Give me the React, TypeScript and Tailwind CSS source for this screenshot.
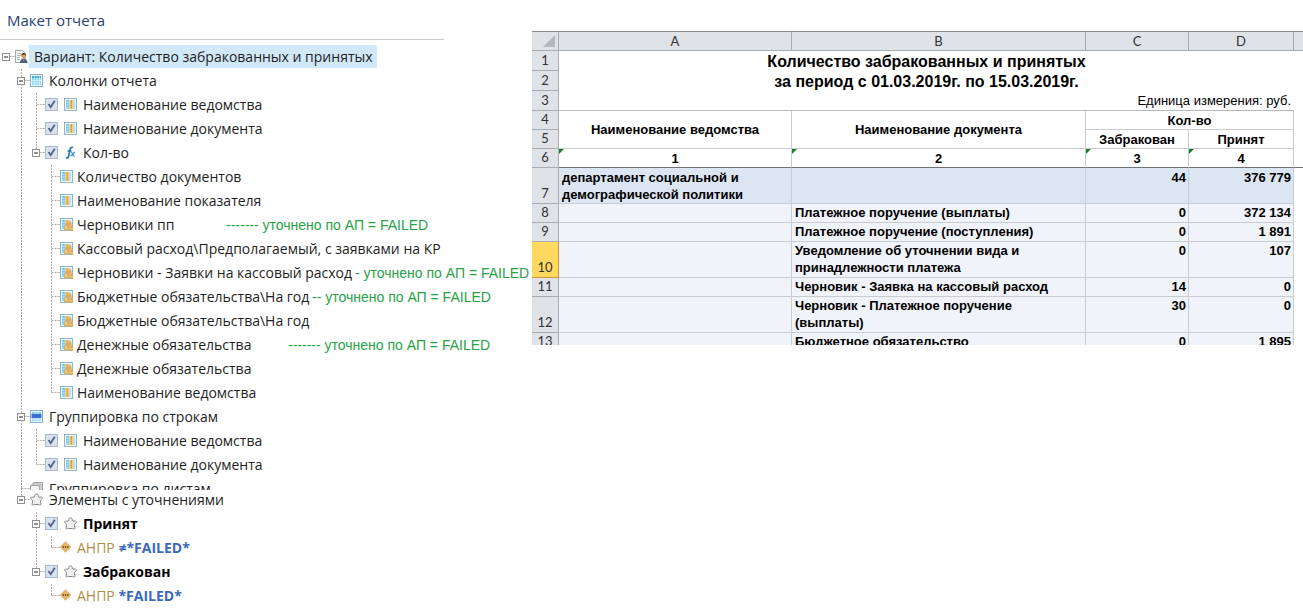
import type { ReactNode } from 'react'

type Guide = 'blank' | 'line' | 'tee' | 'corner' | 'stub'
type IconName = 'report' | 'table' | 'column' | 'coins' | 'fx' | 'rows' | 'sheets' | 'puzzle' | 'diamond'

interface TreeItem {
  guides: Guide[]
  icon: IconName
  label: ReactNode
  toggle?: boolean
  checkbox?: boolean
  selected?: boolean
  bold?: boolean
  note?: string
  labelWidth?: string
}

const level1: Guide[] = ['blank', 'tee']
const level2: Guide[] = ['blank', 'line', 'tee']
const level2Last: Guide[] = ['blank', 'line', 'corner']
const level3: Guide[] = ['blank', 'line', 'blank', 'tee']
const level3Last: Guide[] = ['blank', 'line', 'blank', 'corner']

const mainItems: TreeItem[] = [
  { guides: ['stub'], icon: 'report', label: 'Вариант: Количество забракованных и принятых', toggle: true, selected: true },
  { guides: level1, icon: 'table', label: 'Колонки отчета', toggle: true },
  { guides: level2, icon: 'column', label: 'Наименование ведомства', checkbox: true },
  { guides: level2, icon: 'column', label: 'Наименование документа', checkbox: true },
  { guides: level2Last, icon: 'fx', label: 'Кол-во', toggle: true, checkbox: true },
  { guides: level3, icon: 'column', label: 'Количество документов' },
  { guides: level3, icon: 'column', label: 'Наименование показателя' },
  { guides: level3, icon: 'coins', label: 'Черновики пп', note: '------- уточнено по АП = FAILED', labelWidth: 'w-[149px]' },
  { guides: level3, icon: 'coins', label: 'Кассовый расход\\Предполагаемый, с заявками на КР' },
  { guides: level3, icon: 'coins', label: 'Черновики - Заявки на кассовый расход', note: '- уточнено по АП = FAILED', labelWidth: 'w-[278px]' },
  { guides: level3, icon: 'coins', label: 'Бюджетные обязательства\\На год', note: '-- уточнено по АП = FAILED', labelWidth: 'w-[235px]' },
  { guides: level3, icon: 'coins', label: 'Бюджетные обязательства\\На год' },
  { guides: level3, icon: 'coins', label: 'Денежные обязательства', note: '------- уточнено по АП = FAILED', labelWidth: 'w-[211px]' },
  { guides: level3, icon: 'coins', label: 'Денежные обязательства' },
  { guides: level3Last, icon: 'column', label: 'Наименование ведомства' },
  { guides: level1, icon: 'rows', label: 'Группировка по строкам', toggle: true },
  { guides: level2, icon: 'column', label: 'Наименование ведомства', checkbox: true },
  { guides: level2Last, icon: 'column', label: 'Наименование документа', checkbox: true },
]

const filterItems: TreeItem[] = [
  { guides: ['blank', 'corner'], icon: 'puzzle', label: 'Элементы с уточнениями', toggle: true },
  { guides: ['blank', 'blank', 'tee'], icon: 'puzzle', label: 'Принят', toggle: true, checkbox: true, bold: true },
  { guides: ['blank', 'blank', 'line', 'corner'], icon: 'diamond', label: <Condition value="≠*FAILED*" /> },
  { guides: ['blank', 'blank', 'corner'], icon: 'puzzle', label: 'Забракован', toggle: true, checkbox: true, bold: true },
  { guides: ['blank', 'blank', 'blank', 'corner'], icon: 'diamond', label: <Condition value="*FAILED*" /> },
]

function Condition({ value }: { value: string }) {
  return (
    <>
      <span className="text-[#b08d45]">АНПР</span> <span className="font-bold text-[#3c6abb]">{value}</span>
    </>
  )
}

function ColumnShape() {
  return (
    <>
      <rect x="0.5" y="0.5" width="12" height="12" fill="#f1fafd" stroke="#93b3c0" />
      <path d="M2 2h3v9H2z" fill="#74cfeb" />
      <path d="M9 2h2v9H9z" fill="#a5e0f3" />
      <path d="M2 4.5h3M2 7h3M2 9.5h3M9 4.5h2M9 7h2M9 9.5h2" stroke="#d8f2fa" strokeWidth="0.6" />
      <path d="M5.500 2h3v9h-3z" fill="#ee9c30" />
      <path d="M6.5 2v9" stroke="#f5bc6c" />
    </>
  )
}

const icons: Record<IconName, ReactNode> = {
  report: (
    <>
      <path d="M0.5 0.5h7l2.5 2.5v9.5h-9.5z" fill="#f4f7f8" stroke="#9aaab0" />
      <path d="M2 3.5h4M2 5.5h4M2 7.5h3M2 9.5h3" stroke="#a7c0a8" />
      <circle cx="8.7" cy="5.8" r="2.4" fill="#d79a5b" />
      <path d="M6.2 5.6c0-3.4 5-3.4 5 0-1.2-1-3.5-1-5 0z" fill="#5a3520" />
      <path d="M5 13c0-3 1.5-4.5 3.7-4.5s3.8 1.5 3.8 4.5z" fill="#47647e" />
      <path d="M7.7 8.5h2l-1 3z" fill="#e8792f" />
    </>
  ),
  table: (
    <>
      <rect x="0.5" y="0.5" width="12" height="12" fill="#e9f8fd" stroke="#8ab0c0" />
      <path d="M2 2h9v2H2z" fill="#3fa9d8" />
      <path d="M2 4h9v7H2z" fill="#8fd8f0" />
      <path d="M4.5 2v9M7 2v9M9.5 2v9M2 6.5h9M2 9h9" stroke="#e0f6fd" strokeWidth="0.6" />
    </>
  ),
  column: <ColumnShape />,
  coins: (
    <>
      <ColumnShape />
      <path d="M4 8.5h1.5V5H9V3.5h2.5V7H13v6H8.5v-1H4z" fill="#dcab5b" />
      <ellipse cx="6.3" cy="9" rx="2.3" ry="1.2" fill="#f4d497" stroke="#c38f40" strokeWidth="0.5" />
      <ellipse cx="10.5" cy="8" rx="2" ry="1" fill="#f4d497" stroke="#c38f40" strokeWidth="0.5" />
      <path d="M4.5 11h4M8.8 10.5h3.7" stroke="#f4d497" strokeWidth="0.7" />
    </>
  ),
  fx: (
    <>
      <path d="M9 1.5c-2.2-.8-2.8.8-3.2 3L4.7 10c-.4 1.8-1.2 2.3-2.7 1.7M3.5 5h4" fill="none" stroke="#2477b5" strokeWidth="1.7" />
      <path d="M7 6.2c1.5-.6 1.6 4.7 3.7 3.8M11 6.2c-1 .2-2.8 3-4.2 3.8" fill="none" stroke="#3b91cb" strokeWidth="1.3" />
    </>
  ),
  rows: (
    <>
      <rect x="0.5" y="0.5" width="12" height="12" fill="#e9f8fd" stroke="#8ab0c0" />
      <path d="M2 2h9v2H2zM2 8.5h9V11H2z" fill="#83cdec" />
      <path d="M1.5 4h10v4h-10z" fill="#3a70d6" />
      <path d="M5 2v2M8 2v2M5 8.5V11M8 8.5V11M2 9.8h9" stroke="#e9f8fd" strokeWidth="0.7" />
    </>
  ),
  sheets: (
    <g fill="#f5f5f5" stroke="#a3a3a3">
      <path d="M3.5 0.5h9v9h-9z" />
      <path d="M2 2h9v9H2z" />
      <path d="M0.5 3.5h9v9h-9z" />
    </g>
  ),
  puzzle: (
    <path
      d="M4.7 2.5C4.4.5 8.6.5 8.3 2.5l.6 1.7c1.1.2 3-.7 3.5.5.5 1.5-1.6 1.6-2 2.7l.6 3.9c-.4 1.2-1.7.8-2.4.2H4.4c-.7.6-2 1-2.4-.2l.6-3.9C2.2 6.3.1 6.2.6 4.7c.5-1.2 2.4-.3 3.5-.5z"
      fill="#efefef"
      stroke="#858585"
    />
  ),
  diamond: (
    <>
      <path d="M5.5 0.7 10.8 6l-5.3 5.3L0.2 6z" fill="#e7b767" stroke="#cf9c4c" strokeWidth="0.6" />
      <path d="M2.5 6h1.500M4.8 6h1.500M7.1 6h1.500" stroke="#6b4214" strokeWidth="1.5" />
    </>
  ),
}

const guidePaths: Record<Guide, string> = {
  blank: '',
  line: 'M6.5 0V24',
  tee: 'M6.5 0V24M6.5 11.5H15',
  corner: 'M6.5 0V12M6.5 11.5H15',
  stub: 'M6.5 11.5H15',
}

function GuideCell({ guide, toggle, name }: { guide: Guide; toggle: boolean; name: string }) {
  return (
    <span className="grid h-6 w-[15px] shrink-0">
      <svg className="col-start-1 row-start-1" width="15" height="24" aria-hidden="true">
        <path d={guidePaths[guide]} stroke="#ababab" strokeDasharray="2 1" fill="none" />
      </svg>
      {toggle && (
        <button type="button" aria-label={`Свернуть ${name}`} className="z-10 col-start-1 row-start-1 grid pt-2 pl-0.5">
          <svg width="9" height="9" aria-hidden="true">
            <rect x="0.5" y="0.5" width="7" height="7" fill="#fff" stroke="#919191" />
            <path d="M2 4h4" stroke="#222" />
          </svg>
        </button>
      )}
    </span>
  )
}

function CheckBox({ name }: { name: string }) {
  return (
    <span className="mr-1.5 mb-px grid size-[13px] shrink-0">
      <input
        type="checkbox"
        defaultChecked
        aria-label={name}
        className="peer col-start-1 row-start-1 size-[13px] appearance-none border border-[#a9b8cf] bg-[#d9e1ee]"
      />
      <svg className="pointer-events-none invisible col-start-1 row-start-1 peer-checked:visible" viewBox="0 0 13 13" aria-hidden="true">
        <path d="M3.5 6 5.7 9.2 9.8 2.8" stroke="#4f6288" strokeWidth="1.8" fill="none" />
      </svg>
    </span>
  )
}

function TreeRow({ item }: { item: TreeItem }) {
  const { guides, icon, label, toggle = false, checkbox, selected, bold, note, labelWidth = '' } = item
  const name = typeof label === 'string' ? label : 'АНПР'
  const gap = selected ? 'ml-px h-[23px] w-[348px] bg-[#d1e8f8] pl-[5px]' : guides.length === 4 ? 'ml-1' : 'ml-1.5'

  return (
    <li className="flex h-6 items-start whitespace-nowrap">
      {guides.map((guide, i) => (
        <GuideCell key={i} guide={guide} toggle={toggle && i === guides.length - 1} name={name} />
      ))}
      <span className="flex h-6 items-center">
        {checkbox && <CheckBox name={name} />}
        <svg className="mb-px shrink-0" width="13" height="13" viewBox="0 0 13 13" aria-hidden="true">
          {icons[icon]}
        </svg>
      </span>
      <span className={`${gap} ${labelWidth} ${bold ? 'font-bold text-black' : ''} shrink-0`}>{label}</span>
      {note && <span className="font-['Liberation_Sans',sans-serif] text-sm leading-6 text-[#27a345]">{note}</span>}
    </li>
  )
}

function ReportLayout() {
  return (
    <section className="w-[532px] shrink-0 font-['Open_Sans',sans-serif] text-sm leading-[23px] text-[#1e1e1e]">
      <h1 className="mr-[88px] h-10 border-b border-[#c8cccc] pt-2 pl-[7px] text-[15px] leading-6 text-[#2d3d70]">Макет отчета</h1>
      <ul className="pt-[5px]">
        {mainItems.map((item, i) => (
          <TreeRow key={i} item={item} />
        ))}
      </ul>
      <ul className="h-[13px] overflow-hidden">
        <TreeRow item={{ guides: level1, icon: 'sheets', label: 'Группировка по листам' }} />
      </ul>
      <ul className="-mt-0.5">
        {filterItems.map((item, i) => (
          <TreeRow key={i} item={item} />
        ))}
      </ul>
    </section>
  )
}

interface SheetRow {
  id: number
  name: string
  rejected: string
  accepted: string
  tall?: boolean
  active?: boolean
}

const sheetRows: SheetRow[] = [
  { id: 8, name: 'Платежное поручение (выплаты)', rejected: '0', accepted: '372 134' },
  { id: 9, name: 'Платежное поручение (поступления)', rejected: '0', accepted: '1 891' },
  { id: 10, name: 'Уведомление об уточнении вида и принадлежности платежа', rejected: '0', accepted: '107', tall: true, active: true },
  { id: 11, name: 'Черновик - Заявка на кассовый расход', rejected: '14', accepted: '0' },
  { id: 12, name: 'Черновик - Платежное поручение (выплаты)', rejected: '30', accepted: '0', tall: true },
  { id: 13, name: 'Бюджетное обязательство', rejected: '0', accepted: '1 895' },
]

function RowHeader({ id, active }: { id: number; active?: boolean }) {
  const color = active ? 'border-[#c8993c] bg-[#ffd95f]' : 'border-[#a9adb3] bg-[#dfe2e7]'
  return (
    <th scope="row" className={`${color} border-r border-b p-0 pb-px text-center align-bottom font-['Lato',sans-serif] text-[13px] leading-[17px] font-normal text-[#333]`}>
      {id}
    </th>
  )
}

function Flag() {
  return (
    <svg className="absolute top-0 left-0" width="5" height="5" aria-hidden="true">
      <path d="M0 0h5L0 5z" fill="#1b7a2b" />
    </svg>
  )
}

function Spreadsheet() {
  const line = 'border-r border-b border-[#c9ccd1]'
  const letter = "border-r border-b border-[#a9adb3] bg-[#dfe2e7] p-0 font-['Lato',sans-serif] text-[13px] leading-[18px] font-normal text-[#333]"
  const body = `${line} bg-[#f0f3f9] pt-0 pr-0.5 pb-px pl-[3px] align-top`
  const total = 'border-r border-b border-[#c3cfdf] bg-[#dce6f2] pt-px pr-0.5 pb-0 pl-[3px] align-top'

  return (
    <section className="mt-[31px] max-h-[314px] min-w-0 flex-1 overflow-hidden">
      <table className="w-full table-fixed border-separate border-spacing-0 font-['Liberation_Sans',sans-serif] text-[13px] leading-[17px] font-bold text-black">
        <colgroup>
          <col className="w-[27px]" />
          <col className="w-[233px]" />
          <col className="w-[294px]" />
          <col className="w-[103px]" />
          <col className="w-[105px]" />
          <col />
        </colgroup>
        <thead>
          <tr className="h-5">
            <th className={`${letter} border-t border-t-[#85888c]`}>
              <svg className="ml-auto mr-[3px]" width="12" height="12" aria-hidden="true">
                <path d="M12 0v12H0z" fill="#b4b8bd" />
              </svg>
            </th>
            {['A', 'B', 'C', 'D', ''].map((name) => (
              <th key={name} scope="col" className={`${letter} border-t border-t-[#85888c] last:border-r-0`}>
                {name}
              </th>
            ))}
          </tr>
        </thead>
        <tbody>
          <tr className="h-5">
            <RowHeader id={1} />
            <td colSpan={4} className="p-0 text-center text-base leading-[19px]">Количество забракованных и принятых</td>
            <td />
          </tr>
          <tr className="h-5">
            <RowHeader id={2} />
            <td colSpan={4} className="p-0 text-center text-base leading-[19px]">за период с 01.03.2019г. по 15.03.2019г.</td>
            <td />
          </tr>
          <tr className="h-5">
            <RowHeader id={3} />
            <td colSpan={4} className="border-b border-[#b5b8bc] py-0 pr-[3px] text-right font-normal">Единица измерения: руб.</td>
            <td />
          </tr>
          <tr className="h-[19px]">
            <RowHeader id={4} />
            <td rowSpan={2} className={`${line} p-0 text-center`}>Наименование ведомства</td>
            <td rowSpan={2} className={`${line} p-0 text-center`}>Наименование документа</td>
            <td colSpan={2} className={`${line} p-0 text-center`}>Кол-во</td>
            <td />
          </tr>
          <tr className="h-[19px]">
            <RowHeader id={5} />
            <td className={`${line} p-0 text-center`}>Забракован</td>
            <td className={`${line} p-0 text-center`}>Принят</td>
            <td />
          </tr>
          <tr className="h-[19px]">
            <RowHeader id={6} />
            {[1, 2, 3, 4].map((n) => (
              <td key={n} className="relative border-r border-b border-r-[#c9ccd1] border-b-[#707378] p-0 text-center">
                <Flag />
                {n}
              </td>
            ))}
            <td className="border-b border-[#707378]" />
          </tr>
          <tr className="h-9">
            <RowHeader id={7} />
            <td className={total}>департамент социальной и демографической политики</td>
            <td className={total} />
            <td className={`${total} text-right`}>44</td>
            <td className={`${total} text-right`}>376 779</td>
            <td />
          </tr>
          {sheetRows.map((row) => (
            <tr key={row.id} className={row.tall ? 'h-9' : 'h-[19px]'}>
              <RowHeader id={row.id} active={row.active} />
              <td className={body} />
              <td className={body}>{row.name}</td>
              <td className={`${body} text-right`}>{row.rejected}</td>
              <td className={`${body} text-right`}>{row.accepted}</td>
              <td />
            </tr>
          ))}
        </tbody>
      </table>
    </section>
  )
}

export default function App() {
  return (
    <main className="flex min-h-screen items-start bg-white">
      <ReportLayout />
      <Spreadsheet />
    </main>
  )
}
